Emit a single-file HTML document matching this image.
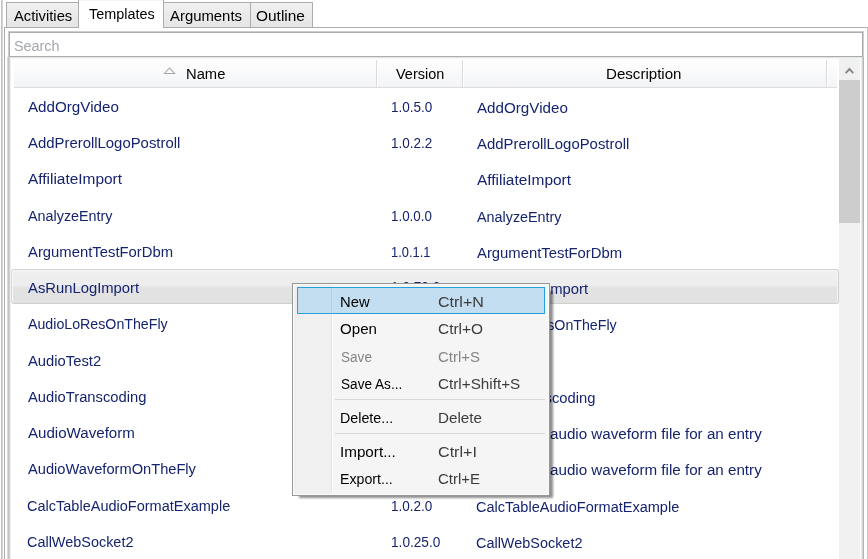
<!DOCTYPE html>
<html><head><meta charset="utf-8">
<style>
html,body{margin:0;padding:0;}
body{width:868px;height:559px;overflow:hidden;position:relative;background:#fff;font-family:"Liberation Sans",sans-serif;}
.a{position:absolute;box-sizing:border-box;}
.t{position:absolute;font-size:15.5px;line-height:20px;white-space:pre;transform-origin:0 0;}
.tb,.hd{color:#000;}
.ph{color:#a2a6ad;}
.cell{color:#16246f;}
.tab{position:absolute;box-sizing:border-box;border:1px solid #acacac;background:linear-gradient(#f0f0f0,#e5e5e5);}
.mi{color:#000;}
.ms{color:#3c3c3c;}
.mi.dis,.ms.dis{color:#858585;}
</style></head><body>
<div class="a" style="left:1px;top:0;width:1px;height:559px;background:#c2c2c2"></div>
<div class="a" style="left:2px;top:0;width:1px;height:559px;background:#d6d6d6"></div>
<div class="a" style="left:4px;top:27px;width:864px;height:540px;border:1px solid #acacac;border-right-color:#c6c6c6;background:#fff"></div>
<div class="tab" style="left:6px;top:2px;width:73px;height:26px;"></div>
<div class="tab" style="left:163px;top:2px;width:88px;height:26px;"></div>
<div class="tab" style="left:250px;top:2px;width:63px;height:26px;"></div>
<div class="a" style="left:78px;top:-1px;width:86px;height:29px;border:1px solid #acacac;border-bottom:none;background:#fff"></div>
<div class="a" style="left:79px;top:0;width:84px;height:1px;background:#f3f3f3"></div>
<div class="a" style="left:8px;top:31px;width:856px;height:26px;border:1px solid #cdcdcd;border-bottom:none;background:#fff"></div>
<div class="a" style="left:9px;top:32px;width:854px;height:25px;border:1px solid #a9abb0;background:#fff"></div>
<div class="a" style="left:7px;top:57px;width:1px;height:502px;background:#dadada"></div>
<div class="a" style="left:8px;top:57px;width:1px;height:502px;background:#c4c4c4"></div>
<div class="a" style="left:9px;top:57px;width:1px;height:502px;background:#ced3ce"></div>
<div class="a" style="left:10px;top:57px;width:1px;height:502px;background:#eef1ee"></div>
<div class="a" style="left:10px;top:57px;width:852px;height:1px;background:#e3e7e3"></div>
<div class="a" style="left:10px;top:58px;width:852px;height:1px;background:#f3f5f3"></div>
<div class="a" style="left:861px;top:57px;width:1px;height:502px;background:#e6ebe6"></div>
<div class="a" style="left:862px;top:57px;width:1px;height:502px;background:#cfd5cf"></div>
<div class="a" style="left:863px;top:57px;width:1px;height:502px;background:#b5b5b5"></div>
<div class="a" style="left:14px;top:59px;width:823px;height:29px;background:linear-gradient(#ffffff,#f3f4f6);border-bottom:1px solid #dcdcdc"></div>
<div class="a" style="left:376px;top:60px;width:1px;height:27px;background:#dadada"></div>
<div class="a" style="left:377px;top:60px;width:1px;height:27px;background:#ffffff"></div>
<div class="a" style="left:462px;top:60px;width:1px;height:27px;background:#dadada"></div>
<div class="a" style="left:463px;top:60px;width:1px;height:27px;background:#ffffff"></div>
<div class="a" style="left:826px;top:60px;width:1px;height:27px;background:#dadada"></div>
<div class="a" style="left:827px;top:60px;width:1px;height:27px;background:#ffffff"></div>
<svg class="a" style="left:163px;top:67px" width="13" height="8"><path d="M1.5 6.5 L6.5 1 L11.5 6.5 Z" fill="#fff" stroke="#a5a5a5" stroke-width="1.1"/></svg>
<div class="a" style="left:839px;top:59px;width:21px;height:500px;background:#f0f0f0"></div>
<div class="a" style="left:839px;top:80px;width:21px;height:143px;background:#cdcdcd"></div>
<svg class="a" style="left:839px;top:59px" width="21" height="21"><path d="M6.7 14.2 L10.45 10 L14.2 14.2" fill="none" stroke="#868686" stroke-width="1.9"/></svg>
<div class="a" style="left:11px;top:269px;width:828px;height:35px;border:1px solid #d0d0d0;border-left-color:#d9d9d9;border-radius:3px;box-shadow:inset 1px 1px 0 #f9f9f9,inset -1px 0 0 #f6f6f6;background:linear-gradient(#f0f0f0 0%,#ededed 48%,#e3e3e3 52%,#e1e1e1 100%)"></div>
<div id="t0" class="t tb" style="left:13.90px;top:5.63px;transform:scaleX(0.9525);">Activities</div>
<div id="t1" class="t tb" style="left:88.60px;top:3.63px;transform:scaleX(0.9286);">Templates</div>
<div id="t2" class="t tb" style="left:169.70px;top:5.63px;transform:scaleX(0.9600);">Arguments</div>
<div id="t3" class="t tb" style="left:256.40px;top:5.63px;transform:scaleX(0.9958);">Outline</div>
<div id="t4" class="t ph" style="left:14.17px;top:35.63px;transform:scaleX(0.9277);">Search</div>
<div id="t5" class="t hd" style="left:185.95px;top:63.63px;transform:scaleX(0.9525);">Name</div>
<div id="t6" class="t hd" style="left:396.00px;top:63.63px;transform:scaleX(0.9333);">Version</div>
<div id="t7" class="t hd" style="left:606.43px;top:63.63px;transform:scaleX(0.9737);">Description</div>

<div id="t8" class="t cell" style="left:27.80px;top:96.63px;transform:scaleX(0.9793);">AddOrgVideo</div>
<div id="t9" class="t cell" style="left:391.43px;top:96.63px;transform:scaleX(0.8717);">1.0.5.0</div>
<div id="t10" class="t cell" style="left:477.10px;top:97.63px;transform:scaleX(0.9793);">AddOrgVideo</div>
<div id="t11" class="t cell" style="left:27.80px;top:132.63px;transform:scaleX(0.9608);">AddPrerollLogoPostroll</div>
<div id="t12" class="t cell" style="left:391.43px;top:132.63px;transform:scaleX(0.8696);">1.0.2.2</div>
<div id="t13" class="t cell" style="left:477.10px;top:134.23px;transform:scaleX(0.9608);">AddPrerollLogoPostroll</div>
<div id="t14" class="t cell" style="left:27.80px;top:168.63px;transform:scaleX(0.9947);">AffiliateImport</div>
<div id="t15" class="t cell" style="left:477.10px;top:170.23px;transform:scaleX(0.9947);">AffiliateImport</div>
<div id="t16" class="t cell" style="left:27.80px;top:205.63px;transform:scaleX(0.9253);">AnalyzeEntry</div>
<div id="t17" class="t cell" style="left:391.44px;top:205.63px;transform:scaleX(0.8609);">1.0.0.0</div>
<div id="t18" class="t cell" style="left:477.10px;top:206.63px;transform:scaleX(0.9253);">AnalyzeEntry</div>
<div id="t19" class="t cell" style="left:27.80px;top:241.63px;transform:scaleX(0.9570);">ArgumentTestForDbm</div>
<div id="t20" class="t cell" style="left:391.47px;top:241.63px;transform:scaleX(0.8304);">1.0.1.1</div>
<div id="t21" class="t cell" style="left:477.10px;top:242.63px;transform:scaleX(0.9570);">ArgumentTestForDbm</div>
<div id="t22" class="t cell" style="left:27.80px;top:277.63px;transform:scaleX(0.9552);">AsRunLogImport</div>
<div id="t23" class="t cell" style="left:391.42px;top:276.83px;transform:scaleX(0.8800);">1.0.70.0</div>
<div id="t24" class="t cell" style="left:477.10px;top:278.63px;transform:scaleX(0.9552);">AsRunLogImport</div>
<div id="t25" class="t cell" style="left:27.80px;top:313.63px;transform:scaleX(0.9158);">AudioLoResOnTheFly</div>
<div id="t26" class="t cell" style="left:391.43px;top:313.63px;transform:scaleX(0.8696);">1.0.3.0</div>
<div id="t27" class="t cell" style="left:477.10px;top:314.63px;transform:scaleX(0.9158);">AudioLoResOnTheFly</div>
<div id="t28" class="t cell" style="left:27.80px;top:350.63px;transform:scaleX(0.9539);">AudioTest2</div>
<div id="t29" class="t cell" style="left:391.45px;top:350.63px;transform:scaleX(0.8478);">1.0.1.0</div>
<div id="t30" class="t cell" style="left:27.80px;top:386.63px;transform:scaleX(0.9524);">AudioTranscoding</div>
<div id="t31" class="t cell" style="left:391.43px;top:386.63px;transform:scaleX(0.8696);">1.0.4.0</div>
<div id="t32" class="t cell" style="left:477.10px;top:387.63px;transform:scaleX(0.9524);">AudioTranscoding</div>
<div id="t33" class="t cell" style="left:27.80px;top:422.63px;transform:scaleX(0.9743);">AudioWaveform</div>
<div id="t34" class="t cell" style="left:391.43px;top:422.63px;transform:scaleX(0.8696);">1.0.6.0</div>
<div id="t35" class="t cell" style="left:476.17px;top:424.23px;transform:scaleX(0.9311);">Creates an</div>
<div id="t36" class="t cell" style="left:550.32px;top:424.23px;transform:scaleX(0.9791);">audio waveform file for an entry</div>
<div id="t37" class="t cell" style="left:27.80px;top:458.63px;transform:scaleX(0.9449);">AudioWaveformOnTheFly</div>
<div id="t38" class="t cell" style="left:391.43px;top:458.63px;transform:scaleX(0.8717);">1.0.2.0</div>
<div id="t39" class="t cell" style="left:476.17px;top:459.63px;transform:scaleX(0.9311);">Creates an</div>
<div id="t40" class="t cell" style="left:550.32px;top:459.63px;transform:scaleX(0.9791);">audio waveform file for an entry</div>
<div id="t41" class="t cell" style="left:26.86px;top:495.63px;transform:scaleX(0.9361);">CalcTableAudioFormatExample</div>
<div id="t42" class="t cell" style="left:391.43px;top:495.63px;transform:scaleX(0.8717);">1.0.2.0</div>
<div id="t43" class="t cell" style="left:476.16px;top:496.63px;transform:scaleX(0.9361);">CalcTableAudioFormatExample</div>
<div id="t44" class="t cell" style="left:26.87px;top:531.63px;transform:scaleX(0.9310);">CallWebSocket2</div>
<div id="t45" class="t cell" style="left:391.42px;top:531.63px;transform:scaleX(0.8800);">1.0.25.0</div>
<div id="t46" class="t cell" style="left:476.17px;top:532.63px;transform:scaleX(0.9310);">CallWebSocket2</div>

<div class="a" style="left:299px;top:291px;width:254px;height:207px;background:rgba(0,0,0,0.44);filter:blur(1px)"></div>
<div class="a" style="left:292px;top:283px;width:258px;height:213px;border:1px solid #979797;background:#f5f5f5"></div>
<div class="a" style="left:293px;top:284px;width:256px;height:211px;border:1px solid #fafafa;"></div>
<div class="a" style="left:294px;top:285px;width:37px;height:209px;background:#f0f0f0"></div>
<div class="a" style="left:331px;top:286px;width:1px;height:206px;background:#e2e2e2"></div>
<div class="a" style="left:332px;top:286px;width:1px;height:206px;background:#ffffff"></div>
<div class="a" style="left:297px;top:287px;width:248px;height:27px;border:1px solid #26a0da;background:#c3def0"></div>
<div class="a" style="left:331px;top:288px;width:1px;height:25px;background:#b5d0e2"></div>
<div class="a" style="left:335px;top:399px;width:210px;height:1px;background:#d7d7d7"></div>
<div class="a" style="left:335px;top:433px;width:210px;height:1px;background:#d7d7d7"></div>
<div id="t47" class="t mi " style="left:340.45px;top:291.63px;transform:scaleX(0.9533);">New</div>
<div id="t48" class="t ms " style="left:438.07px;top:291.63px;transform:scaleX(1.0333);">Ctrl+N</div>
<div id="t49" class="t mi " style="left:340.42px;top:318.96px;transform:scaleX(0.9750);">Open</div>
<div id="t50" class="t ms " style="left:438.10px;top:318.96px;transform:scaleX(0.9955);">Ctrl+O</div>
<div id="t51" class="t mi dis" style="left:340.52px;top:346.83px;transform:scaleX(0.8765);">Save</div>
<div id="t52" class="t ms dis" style="left:438.13px;top:346.83px;transform:scaleX(0.9667);">Ctrl+S</div>
<div id="t53" class="t mi " style="left:340.52px;top:373.63px;transform:scaleX(0.8779);">Save As...</div>
<div id="t54" class="t ms " style="left:438.12px;top:373.63px;transform:scaleX(0.9841);">Ctrl+Shift+S</div>
<div id="t55" class="t mi " style="left:340.48px;top:407.63px;transform:scaleX(0.9214);">Delete...</div>
<div id="t56" class="t ms " style="left:438.12px;top:407.63px;transform:scaleX(0.9814);">Delete</div>
<div id="t57" class="t mi " style="left:340.42px;top:441.63px;transform:scaleX(0.9818);">Import...</div>
<div id="t58" class="t ms " style="left:438.06px;top:441.63px;transform:scaleX(1.0400);">Ctrl+I</div>
<div id="t59" class="t mi " style="left:340.49px;top:468.63px;transform:scaleX(0.9143);">Export...</div>
<div id="t60" class="t ms " style="left:438.13px;top:468.63px;transform:scaleX(0.9667);">Ctrl+E</div>

</body></html>
